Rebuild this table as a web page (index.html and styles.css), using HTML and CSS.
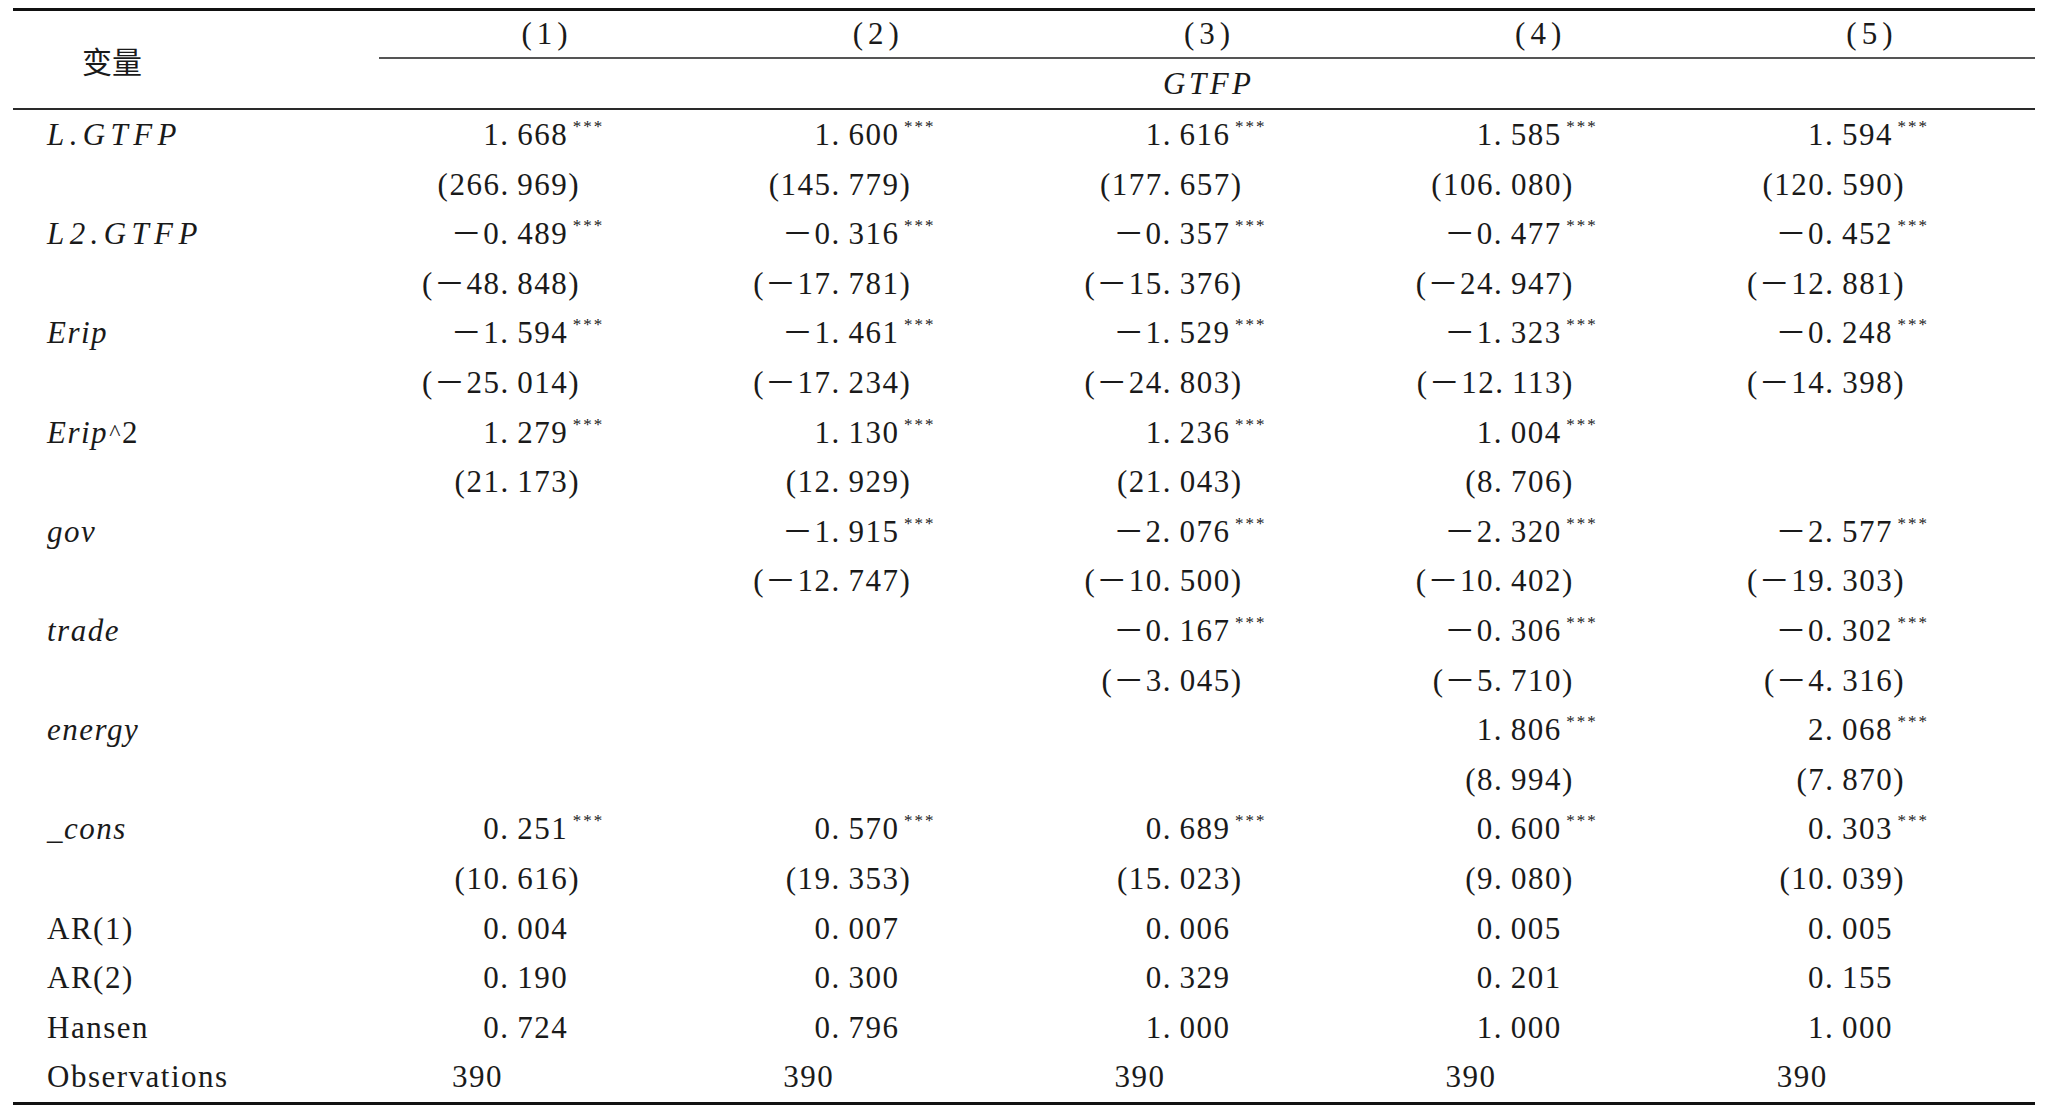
FILE: index.html
```html
<!DOCTYPE html>
<html lang="zh">
<head>
<meta charset="utf-8">
<title>回归结果</title>
<link rel="stylesheet" href="styles.css">
</head>
<body>
<div class="tbl">
  <div class="head">
    <div class="var">变量</div>
    <div class="hc">(1)</div>
    <div class="hc">(2)</div>
    <div class="hc">(3)</div>
    <div class="hc">(4)</div>
    <div class="hc">(5)</div>
    <div class="dep">GTFP</div>
  </div>

  <div class="row"><div class="lab it gt">L.GTFP</div><div class="v">1.&#8201;668<span class="st">***</span></div><div class="v">1.&#8201;600<span class="st">***</span></div><div class="v">1.&#8201;616<span class="st">***</span></div><div class="v">1.&#8201;585<span class="st">***</span></div><div class="v">1.&#8201;594<span class="st">***</span></div></div>
  <div class="row"><div class="lab"></div><div class="v t">(266.&#8201;969)</div><div class="v t">(145.&#8201;779)</div><div class="v t">(177.&#8201;657)</div><div class="v t">(106.&#8201;080)</div><div class="v t">(120.&#8201;590)</div></div>

  <div class="row"><div class="lab it gt">L2.GTFP</div><div class="v">－0.&#8201;489<span class="st">***</span></div><div class="v">－0.&#8201;316<span class="st">***</span></div><div class="v">－0.&#8201;357<span class="st">***</span></div><div class="v">－0.&#8201;477<span class="st">***</span></div><div class="v">－0.&#8201;452<span class="st">***</span></div></div>
  <div class="row"><div class="lab"></div><div class="v t">(－48.&#8201;848)</div><div class="v t">(－17.&#8201;781)</div><div class="v t">(－15.&#8201;376)</div><div class="v t">(－24.&#8201;947)</div><div class="v t">(－12.&#8201;881)</div></div>

  <div class="row"><div class="lab it">Erip</div><div class="v">－1.&#8201;594<span class="st">***</span></div><div class="v">－1.&#8201;461<span class="st">***</span></div><div class="v">－1.&#8201;529<span class="st">***</span></div><div class="v">－1.&#8201;323<span class="st">***</span></div><div class="v">－0.&#8201;248<span class="st">***</span></div></div>
  <div class="row"><div class="lab"></div><div class="v t">(－25.&#8201;014)</div><div class="v t">(－17.&#8201;234)</div><div class="v t">(－24.&#8201;803)</div><div class="v t">(－12.&#8201;113)</div><div class="v t">(－14.&#8201;398)</div></div>

  <div class="row"><div class="lab"><span class="it">Erip</span><span class="caret">^</span>2</div><div class="v">1.&#8201;279<span class="st">***</span></div><div class="v">1.&#8201;130<span class="st">***</span></div><div class="v">1.&#8201;236<span class="st">***</span></div><div class="v">1.&#8201;004<span class="st">***</span></div><div class="v"></div></div>
  <div class="row"><div class="lab"></div><div class="v t">(21.&#8201;173)</div><div class="v t">(12.&#8201;929)</div><div class="v t">(21.&#8201;043)</div><div class="v t">(8.&#8201;706)</div><div class="v t"></div></div>

  <div class="row"><div class="lab it">gov</div><div class="v"></div><div class="v">－1.&#8201;915<span class="st">***</span></div><div class="v">－2.&#8201;076<span class="st">***</span></div><div class="v">－2.&#8201;320<span class="st">***</span></div><div class="v">－2.&#8201;577<span class="st">***</span></div></div>
  <div class="row"><div class="lab"></div><div class="v t"></div><div class="v t">(－12.&#8201;747)</div><div class="v t">(－10.&#8201;500)</div><div class="v t">(－10.&#8201;402)</div><div class="v t">(－19.&#8201;303)</div></div>

  <div class="row"><div class="lab it">trade</div><div class="v"></div><div class="v"></div><div class="v">－0.&#8201;167<span class="st">***</span></div><div class="v">－0.&#8201;306<span class="st">***</span></div><div class="v">－0.&#8201;302<span class="st">***</span></div></div>
  <div class="row"><div class="lab"></div><div class="v t"></div><div class="v t"></div><div class="v t">(－3.&#8201;045)</div><div class="v t">(－5.&#8201;710)</div><div class="v t">(－4.&#8201;316)</div></div>

  <div class="row"><div class="lab it">energy</div><div class="v"></div><div class="v"></div><div class="v"></div><div class="v">1.&#8201;806<span class="st">***</span></div><div class="v">2.&#8201;068<span class="st">***</span></div></div>
  <div class="row"><div class="lab"></div><div class="v t"></div><div class="v t"></div><div class="v t"></div><div class="v t">(8.&#8201;994)</div><div class="v t">(7.&#8201;870)</div></div>

  <div class="row"><div class="lab it">_cons</div><div class="v">0.&#8201;251<span class="st">***</span></div><div class="v">0.&#8201;570<span class="st">***</span></div><div class="v">0.&#8201;689<span class="st">***</span></div><div class="v">0.&#8201;600<span class="st">***</span></div><div class="v">0.&#8201;303<span class="st">***</span></div></div>
  <div class="row"><div class="lab"></div><div class="v t">(10.&#8201;616)</div><div class="v t">(19.&#8201;353)</div><div class="v t">(15.&#8201;023)</div><div class="v t">(9.&#8201;080)</div><div class="v t">(10.&#8201;039)</div></div>

  <div class="row"><div class="lab">AR(1)</div><div class="v">0.&#8201;004</div><div class="v">0.&#8201;007</div><div class="v">0.&#8201;006</div><div class="v">0.&#8201;005</div><div class="v">0.&#8201;005</div></div>
  <div class="row"><div class="lab">AR(2)</div><div class="v">0.&#8201;190</div><div class="v">0.&#8201;300</div><div class="v">0.&#8201;329</div><div class="v">0.&#8201;201</div><div class="v">0.&#8201;155</div></div>
  <div class="row"><div class="lab">Hansen</div><div class="v">0.&#8201;724</div><div class="v">0.&#8201;796</div><div class="v">1.&#8201;000</div><div class="v">1.&#8201;000</div><div class="v">1.&#8201;000</div></div>
  <div class="row"><div class="lab">Observations</div><div class="v n">390</div><div class="v n">390</div><div class="v n">390</div><div class="v n">390</div><div class="v n">390</div></div>
</div>
</body>
</html>
```

FILE: styles.css
```css
html, body {
  margin: 0;
  padding: 0;
  background: #ffffff;
}

body {
  color: #1a1a1a;
  font-family: "Liberation Serif", "Noto Sans CJK SC", serif;
  font-size: 31px;
}

.tbl {
  margin: 8px 13px 0;
  width: 2022px;
  border-top: 3px solid #111111;
  border-bottom: 3px solid #111111;
}

.head {
  display: grid;
  grid-template-columns: 366px repeat(5, 1fr);
  grid-template-rows: 48px 49px;
  border-bottom: 2px solid #2a2a2a;
}

.var {
  grid-row: 1 / 3;
  grid-column: 1;
  display: flex;
  align-items: center;
  padding-left: 69px;
  font-family: "Noto Sans CJK SC", sans-serif;
  font-size: 30px;
  font-weight: 400;
}

.hc {
  box-sizing: border-box;
  border-bottom: 2px solid #555555;
  display: flex;
  align-items: center;
  justify-content: center;
  letter-spacing: 5px;
  padding-left: 5px;
}

.dep {
  grid-row: 2;
  grid-column: 2 / 7;
  text-align: center;
  line-height: 49px;
  font-style: italic;
  letter-spacing: 3.5px;
  padding-left: 3.5px;
}

.row {
  display: grid;
  grid-template-columns: 366px repeat(5, 1fr);
  height: 49.6px;
  line-height: 49.6px;
}

.lab {
  padding-left: 34px;
  letter-spacing: 1.5px;
  white-space: nowrap;
}

.it {
  font-style: italic;
}

.lab.gt {
  letter-spacing: 5.4px;
}

.caret {
  font-size: 24px;
  vertical-align: 3px;
  margin-left: 1px;
}

.v {
  text-align: right;
  padding-right: 142px;
  letter-spacing: 1.5px;
  white-space: nowrap;
}

.v.t {
  padding-right: 130px;
}

.v.n {
  text-align: left;
  padding-left: 73px;
  padding-right: 0;
}

.st {
  font-size: 17px;
  letter-spacing: 2px;
  line-height: 1;
  margin-left: 4.5px;
  margin-right: -36px;
  vertical-align: 13px;
}
```
